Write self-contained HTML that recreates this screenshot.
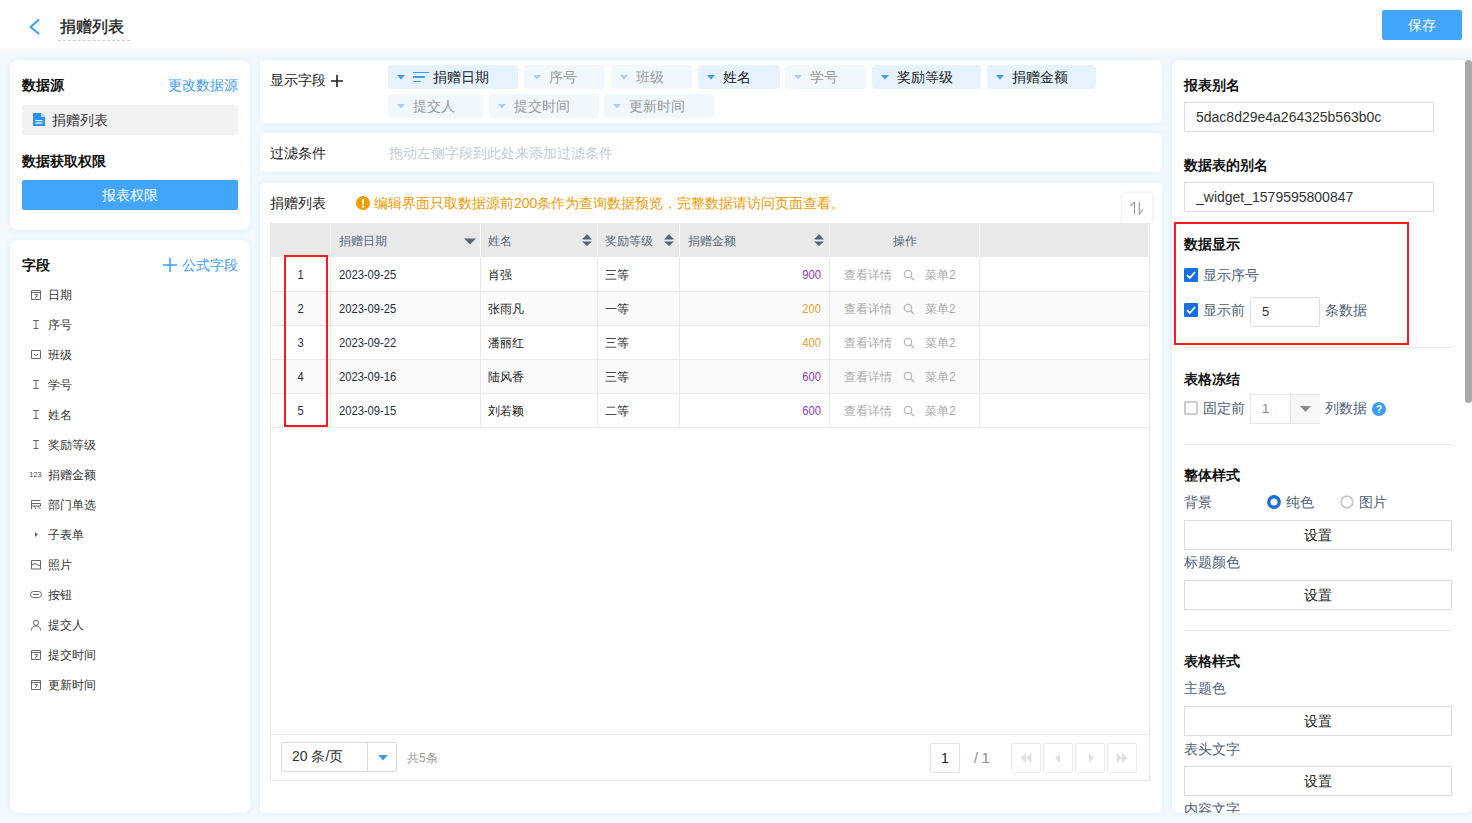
<!DOCTYPE html>
<html><head><meta charset="utf-8">
<style>
*{box-sizing:border-box;margin:0;padding:0}
html,body{width:1472px;height:823px;overflow:hidden}
body{position:relative;background:#f2f9fe;font-family:"Liberation Sans",sans-serif;color:#333;font-size:14px;line-height:20px}
.a{position:absolute;white-space:nowrap}
.pn{position:absolute;background:#fff;box-shadow:0 0 6px rgba(0,150,250,.11)}
.b{font-weight:bold;color:#111}
.blue{color:#3d9cf5}
.t12{font-size:12px}
.t13{font-size:13px}
.btn{position:absolute;background:#42a5fc;color:#fff;text-align:center;border-radius:2px}
.fi{position:absolute;left:30px;width:12px;height:12px}
.num{font-size:13px;line-height:20px;color:#1f2d3d;transform:scaleX(.86);transform-origin:0 0}
.numc{transform-origin:50% 0}
.numr{transform-origin:100% 0}
.fl{position:absolute;left:48px;font-size:12px;line-height:20px;color:#333}
</style></head><body>

<!-- header -->
<div class="a" style="left:0;top:0;width:1472px;height:50px;background:#fff"></div>
<svg class="a" style="left:27px;top:17px" width="16" height="20" viewBox="0 0 16 20"><polyline points="11.5,3 3.5,10 11.5,16.5" fill="none" stroke="#3d9cf5" stroke-width="2" stroke-linecap="round" stroke-linejoin="round"/></svg>
<div class="a" style="left:60px;top:16px;font-size:16px;line-height:22px;color:#1a1a1a;-webkit-text-stroke:0.35px #1a1a1a">捐赠列表</div>
<div class="a" style="left:58px;top:40px;width:72px;height:0;border-top:1px dashed #d0d0d0"></div>
<div class="btn" style="left:1382px;top:10px;width:80px;height:30px;line-height:30px">保存</div>

<!-- left panel 1 -->
<div class="pn" style="left:10px;top:60px;width:240px;height:170px;border-radius:8px"></div>
<div class="a b" style="left:22px;top:75px">数据源</div>
<div class="a blue" style="left:168px;top:75px">更改数据源</div>
<div class="a" style="left:22px;top:105px;width:216px;height:30px;background:#f2f2f2;border-radius:2px"></div>
<svg class="a" style="left:33px;top:113px" width="12" height="13" viewBox="0 0 12 13"><path d="M0 0H8L12 4V13H0Z" fill="#2d8ff0"/><path d="M8 0V4H12" fill="#bfe0fb"/><rect x="2.5" y="7" width="7" height="1.2" fill="#fff"/><rect x="2.5" y="9.5" width="7" height="1.2" fill="#fff"/></svg>
<div class="a" style="left:52px;top:110px">捐赠列表</div>
<div class="a b" style="left:22px;top:151px">数据获取权限</div>
<div class="btn" style="left:22px;top:180px;width:216px;height:30px;line-height:30px">报表权限</div>

<!-- left panel 2 -->
<div class="pn" style="left:10px;top:240px;width:240px;height:573px;border-radius:8px"></div>
<div class="a b" style="left:22px;top:255px">字段</div>
<svg class="a" style="left:163px;top:258px" width="14" height="14" viewBox="0 0 14 14"><path d="M7 0V14M0 7H14" stroke="#3d9cf5" stroke-width="1.5"/></svg>
<div class="a blue" style="left:182px;top:255px">公式字段</div>

<!-- fields -->
<svg class="a" style="left:30px;top:289px" width="12" height="11" viewBox="0 0 12 11"><path d="M1.5 1.5H10.5V10.5H1.5Z M1.5 3.5H10.5" fill="none" stroke="#666" stroke-width="1"/><path d="M4.5 5.5H7.5L5.5 9" fill="none" stroke="#666" stroke-width="1"/></svg>
<div class="fl" style="top:285px">日期</div>
<svg class="a" style="left:30px;top:319px" width="12" height="11" viewBox="0 0 12 11"><path d="M3 1.5H9M6 1.5V9M3.5 9.5H8.5" fill="none" stroke="#666" stroke-width="1"/></svg>
<div class="fl" style="top:315px">序号</div>
<svg class="a" style="left:30px;top:349px" width="12" height="11" viewBox="0 0 12 11"><path d="M1.5 1.5H10.5V9.5H1.5Z" fill="none" stroke="#666" stroke-width="1"/><path d="M4 5L6 6.5L8 5" fill="none" stroke="#666" stroke-width="1"/></svg>
<div class="fl" style="top:345px">班级</div>
<svg class="a" style="left:30px;top:379px" width="12" height="11" viewBox="0 0 12 11"><path d="M3 1.5H9M6 1.5V9M3.5 9.5H8.5" fill="none" stroke="#666" stroke-width="1"/></svg>
<div class="fl" style="top:375px">学号</div>
<svg class="a" style="left:30px;top:409px" width="12" height="11" viewBox="0 0 12 11"><path d="M3 1.5H9M6 1.5V9M3.5 9.5H8.5" fill="none" stroke="#666" stroke-width="1"/></svg>
<div class="fl" style="top:405px">姓名</div>
<svg class="a" style="left:30px;top:439px" width="12" height="11" viewBox="0 0 12 11"><path d="M3 1.5H9M6 1.5V9M3.5 9.5H8.5" fill="none" stroke="#666" stroke-width="1"/></svg>
<div class="fl" style="top:435px">奖励等级</div>
<div class="a" style="left:29px;top:469px;font-size:8px;line-height:11px;color:#555;letter-spacing:-0.3px">123</div>
<div class="fl" style="top:465px">捐赠金额</div>
<svg class="a" style="left:30px;top:499px" width="12" height="11" viewBox="0 0 12 11"><path d="M1.5 1.5H10.5M1.5 1.5V10M1.5 4.5H10.5V7H1.5M4 7L6 10M7.5 7L10.5 10" fill="none" stroke="#666" stroke-width="1"/></svg>
<div class="fl" style="top:495px">部门单选</div>
<svg class="a" style="left:30px;top:529px" width="12" height="11" viewBox="0 0 12 11"><path d="M5 3L8 5.5L5 8Z" fill="#666"/></svg>
<div class="fl" style="top:525px">子表单</div>
<svg class="a" style="left:30px;top:559px" width="12" height="11" viewBox="0 0 12 11"><path d="M1.5 1.5H10.5V10H1.5Z" fill="none" stroke="#666" stroke-width="1"/><path d="M2 6L5 4.5L10 7" fill="none" stroke="#666" stroke-width="1"/></svg>
<div class="fl" style="top:555px">照片</div>
<svg class="a" style="left:29px;top:589px" width="14" height="11" viewBox="0 0 14 11"><rect x="1.5" y="2.5" width="11" height="6" rx="3" fill="none" stroke="#666" stroke-width="1"/><path d="M4 5.5H10" stroke="#666" stroke-width="1"/></svg>
<div class="fl" style="top:585px">按钮</div>
<svg class="a" style="left:30px;top:619px" width="12" height="12" viewBox="0 0 12 12"><circle cx="6" cy="3.8" r="2.6" fill="none" stroke="#666" stroke-width="1"/><path d="M1.5 11.5C1.5 8 3.5 7 6 7S10.5 8 10.5 11.5" fill="none" stroke="#666" stroke-width="1"/></svg>
<div class="fl" style="top:615px">提交人</div>
<svg class="a" style="left:30px;top:649px" width="12" height="11" viewBox="0 0 12 11"><path d="M1.5 1.5H10.5V10.5H1.5Z M1.5 3.5H10.5" fill="none" stroke="#666" stroke-width="1"/><path d="M4.5 5.5H7.5L5.5 9" fill="none" stroke="#666" stroke-width="1"/></svg>
<div class="fl" style="top:645px">提交时间</div>
<svg class="a" style="left:30px;top:679px" width="12" height="11" viewBox="0 0 12 11"><path d="M1.5 1.5H10.5V10.5H1.5Z M1.5 3.5H10.5" fill="none" stroke="#666" stroke-width="1"/><path d="M4.5 5.5H7.5L5.5 9" fill="none" stroke="#666" stroke-width="1"/></svg>
<div class="fl" style="top:675px">更新时间</div>

<!-- middle panels -->
<div class="pn" style="left:260px;top:60px;width:902px;height:63px;border-radius:4px"></div>
<div class="a" style="left:270px;top:70px;color:#222">显示字段</div>
<svg class="a" style="left:331px;top:75px" width="12" height="12" viewBox="0 0 12 12"><path d="M6 0V12M0 6H12" stroke="#222" stroke-width="1.6"/></svg>
<div class="a" style="left:388px;top:65px;width:130px;height:24px;background:#e6f3fe;border-radius:4px"></div>
<svg class="a" style="left:397px;top:75px" width="8" height="5" viewBox="0 0 8 5"><path d="M0 0H8L4 4.5Z" fill="#3d9cf5"/></svg>
<svg class="a" style="left:413px;top:71px" width="16" height="12" viewBox="0 0 16 12"><rect x="0" y="1" width="16" height="1" fill="#3d9cf5"/><rect x="0" y="5" width="12" height="2" fill="#3d9cf5"/><rect x="0" y="10" width="8" height="1" fill="#3d9cf5"/></svg>
<div class="a" style="left:433px;top:67px;color:#222">捐赠日期</div>
<div class="a" style="left:524px;top:65px;width:81px;height:24px;background:#f0f8fe;border-radius:4px"></div>
<svg class="a" style="left:533px;top:75px" width="8" height="5" viewBox="0 0 8 5"><path d="M0 0H8L4 4.5Z" fill="#a5d3fa"/></svg>
<div class="a" style="left:549px;top:67px;color:#999">序号</div>
<div class="a" style="left:611px;top:65px;width:81px;height:24px;background:#f0f8fe;border-radius:4px"></div>
<svg class="a" style="left:620px;top:75px" width="8" height="5" viewBox="0 0 8 5"><path d="M0 0H8L4 4.5Z" fill="#a5d3fa"/></svg>
<div class="a" style="left:636px;top:67px;color:#999">班级</div>
<div class="a" style="left:698px;top:65px;width:82px;height:24px;background:#e6f3fe;border-radius:4px"></div>
<svg class="a" style="left:707px;top:75px" width="8" height="5" viewBox="0 0 8 5"><path d="M0 0H8L4 4.5Z" fill="#3d9cf5"/></svg>
<div class="a" style="left:723px;top:67px;color:#222">姓名</div>
<div class="a" style="left:785px;top:65px;width:81px;height:24px;background:#f0f8fe;border-radius:4px"></div>
<svg class="a" style="left:794px;top:75px" width="8" height="5" viewBox="0 0 8 5"><path d="M0 0H8L4 4.5Z" fill="#a5d3fa"/></svg>
<div class="a" style="left:810px;top:67px;color:#999">学号</div>
<div class="a" style="left:872px;top:65px;width:109px;height:24px;background:#e6f3fe;border-radius:4px"></div>
<svg class="a" style="left:881px;top:75px" width="8" height="5" viewBox="0 0 8 5"><path d="M0 0H8L4 4.5Z" fill="#3d9cf5"/></svg>
<div class="a" style="left:897px;top:67px;color:#222">奖励等级</div>
<div class="a" style="left:987px;top:65px;width:109px;height:24px;background:#e6f3fe;border-radius:4px"></div>
<svg class="a" style="left:996px;top:75px" width="8" height="5" viewBox="0 0 8 5"><path d="M0 0H8L4 4.5Z" fill="#3d9cf5"/></svg>
<div class="a" style="left:1012px;top:67px;color:#222">捐赠金额</div>
<div class="a" style="left:388px;top:94px;width:95px;height:24px;background:#f0f8fe;border-radius:4px"></div>
<svg class="a" style="left:397px;top:104px" width="8" height="5" viewBox="0 0 8 5"><path d="M0 0H8L4 4.5Z" fill="#a5d3fa"/></svg>
<div class="a" style="left:413px;top:96px;color:#999">提交人</div>
<div class="a" style="left:489px;top:94px;width:110px;height:24px;background:#f0f8fe;border-radius:4px"></div>
<svg class="a" style="left:498px;top:104px" width="8" height="5" viewBox="0 0 8 5"><path d="M0 0H8L4 4.5Z" fill="#a5d3fa"/></svg>
<div class="a" style="left:514px;top:96px;color:#999">提交时间</div>
<div class="a" style="left:604px;top:94px;width:110px;height:24px;background:#f0f8fe;border-radius:4px"></div>
<svg class="a" style="left:613px;top:104px" width="8" height="5" viewBox="0 0 8 5"><path d="M0 0H8L4 4.5Z" fill="#a5d3fa"/></svg>
<div class="a" style="left:629px;top:96px;color:#999">更新时间</div>

<div class="pn" style="left:260px;top:133px;width:902px;height:39px;border-radius:4px"></div>
<div class="a" style="left:270px;top:143px;color:#222">过滤条件</div>
<div class="a" style="left:389px;top:143px;color:#c3cbd3">拖动左侧字段到此处来添加过滤条件</div>

<div class="pn" style="left:260px;top:183px;width:902px;height:630px;border-radius:4px"></div>
<div class="a" style="left:270px;top:193px;color:#222">捐赠列表</div>
<svg class="a" style="left:356px;top:196px" width="14" height="14" viewBox="0 0 14 14"><circle cx="7" cy="7" r="7" fill="#f39c00"/><rect x="6" y="3" width="2" height="5.5" fill="#fff"/><rect x="6" y="9.5" width="2" height="2" fill="#fff"/></svg>
<div class="a" style="left:374px;top:193px;color:#f29a00">编辑界面只取数据源前200条作为查询数据预览，完整数据请访问页面查看。</div>
<div class="a" style="left:1122px;top:193px;width:30px;height:30px;background:#fff;box-shadow:0 0 3px rgba(0,0,0,.12)"></div>
<svg class="a" style="left:1129px;top:200px" width="16" height="16" viewBox="0 0 16 16"><path d="M5.5 2V14.5M5.5 2L1.5 6M10.3 2V14.5M10.3 14.5L14 9.5" fill="none" stroke="#999" stroke-width="1.1"/></svg>


<!-- table -->
<div class="a" style="left:270px;top:223px;width:880px;height:558px;border:1px solid #e6e6e6;background:#fff"></div>
<div class="a" style="left:270px;top:223px;width:878px;height:34px;background:#e9e9e9"></div>
<div class="a" style="left:1148px;top:224px;width:1px;height:33px;background:#fbfbfb"></div>
<div class="a" style="left:330px;top:223px;width:1px;height:204px;background:#e9e9e9"></div>
<div class="a" style="left:330px;top:224px;width:1px;height:33px;background:#fff"></div>
<div class="a" style="left:480px;top:223px;width:1px;height:204px;background:#e9e9e9"></div>
<div class="a" style="left:480px;top:224px;width:1px;height:33px;background:#fff"></div>
<div class="a" style="left:597px;top:223px;width:1px;height:204px;background:#e9e9e9"></div>
<div class="a" style="left:597px;top:224px;width:1px;height:33px;background:#fff"></div>
<div class="a" style="left:679px;top:223px;width:1px;height:204px;background:#e9e9e9"></div>
<div class="a" style="left:679px;top:224px;width:1px;height:33px;background:#fff"></div>
<div class="a" style="left:829px;top:223px;width:1px;height:204px;background:#e9e9e9"></div>
<div class="a" style="left:829px;top:224px;width:1px;height:33px;background:#fff"></div>
<div class="a" style="left:979px;top:223px;width:1px;height:204px;background:#e9e9e9"></div>
<div class="a" style="left:979px;top:224px;width:1px;height:33px;background:#fff"></div>
<div class="a" style="left:271px;top:257px;width:878px;height:34px;background:#fff"></div>
<div class="a" style="left:271px;top:291px;width:878px;height:34px;background:#fafafa"></div>
<div class="a" style="left:271px;top:325px;width:878px;height:34px;background:#fff"></div>
<div class="a" style="left:271px;top:359px;width:878px;height:34px;background:#fafafa"></div>
<div class="a" style="left:271px;top:393px;width:878px;height:34px;background:#fff"></div>
<div class="a" style="left:271px;top:291px;width:878px;height:1px;background:#e9e9e9"></div>
<div class="a" style="left:271px;top:325px;width:878px;height:1px;background:#e9e9e9"></div>
<div class="a" style="left:271px;top:359px;width:878px;height:1px;background:#e9e9e9"></div>
<div class="a" style="left:271px;top:393px;width:878px;height:1px;background:#e9e9e9"></div>
<div class="a" style="left:271px;top:427px;width:878px;height:1px;background:#e9e9e9"></div>
<div class="a" style="left:330px;top:257px;width:1px;height:170px;background:#e9e9e9"></div>
<div class="a" style="left:480px;top:257px;width:1px;height:170px;background:#e9e9e9"></div>
<div class="a" style="left:597px;top:257px;width:1px;height:170px;background:#e9e9e9"></div>
<div class="a" style="left:679px;top:257px;width:1px;height:170px;background:#e9e9e9"></div>
<div class="a" style="left:829px;top:257px;width:1px;height:170px;background:#e9e9e9"></div>
<div class="a" style="left:979px;top:257px;width:1px;height:170px;background:#e9e9e9"></div>
<div class="a num numc" style="left:271px;top:265px;width:59px;text-align:center">1</div>
<div class="a num" style="left:339px;top:265px">2023-09-25</div>
<div class="a t12" style="left:488px;top:265px;color:#222">肖强</div>
<div class="a t12" style="left:605px;top:265px;color:#222">三等</div>
<div class="a num numr" style="left:680px;top:265px;width:141px;text-align:right;color:#8c3bb8">900</div>
<div class="a t12" style="left:844px;top:265px;color:#aaa">查看详情</div>
<svg class="a" style="left:903px;top:269px" width="12" height="12" viewBox="0 0 12 12"><circle cx="5" cy="5" r="3.8" fill="none" stroke="#aaa" stroke-width="1"/><path d="M7.8 7.8L11 11" stroke="#aaa" stroke-width="1.1"/></svg>
<div class="a t12" style="left:925px;top:265px;color:#aaa">菜单2</div>
<div class="a num numc" style="left:271px;top:299px;width:59px;text-align:center">2</div>
<div class="a num" style="left:339px;top:299px">2023-09-25</div>
<div class="a t12" style="left:488px;top:299px;color:#222">张雨凡</div>
<div class="a t12" style="left:605px;top:299px;color:#222">一等</div>
<div class="a num numr" style="left:680px;top:299px;width:141px;text-align:right;color:#e8a030">200</div>
<div class="a t12" style="left:844px;top:299px;color:#aaa">查看详情</div>
<svg class="a" style="left:903px;top:303px" width="12" height="12" viewBox="0 0 12 12"><circle cx="5" cy="5" r="3.8" fill="none" stroke="#aaa" stroke-width="1"/><path d="M7.8 7.8L11 11" stroke="#aaa" stroke-width="1.1"/></svg>
<div class="a t12" style="left:925px;top:299px;color:#aaa">菜单2</div>
<div class="a num numc" style="left:271px;top:333px;width:59px;text-align:center">3</div>
<div class="a num" style="left:339px;top:333px">2023-09-22</div>
<div class="a t12" style="left:488px;top:333px;color:#222">潘丽红</div>
<div class="a t12" style="left:605px;top:333px;color:#222">三等</div>
<div class="a num numr" style="left:680px;top:333px;width:141px;text-align:right;color:#e8a030">400</div>
<div class="a t12" style="left:844px;top:333px;color:#aaa">查看详情</div>
<svg class="a" style="left:903px;top:337px" width="12" height="12" viewBox="0 0 12 12"><circle cx="5" cy="5" r="3.8" fill="none" stroke="#aaa" stroke-width="1"/><path d="M7.8 7.8L11 11" stroke="#aaa" stroke-width="1.1"/></svg>
<div class="a t12" style="left:925px;top:333px;color:#aaa">菜单2</div>
<div class="a num numc" style="left:271px;top:367px;width:59px;text-align:center">4</div>
<div class="a num" style="left:339px;top:367px">2023-09-16</div>
<div class="a t12" style="left:488px;top:367px;color:#222">陆风香</div>
<div class="a t12" style="left:605px;top:367px;color:#222">三等</div>
<div class="a num numr" style="left:680px;top:367px;width:141px;text-align:right;color:#8c3bb8">600</div>
<div class="a t12" style="left:844px;top:367px;color:#aaa">查看详情</div>
<svg class="a" style="left:903px;top:371px" width="12" height="12" viewBox="0 0 12 12"><circle cx="5" cy="5" r="3.8" fill="none" stroke="#aaa" stroke-width="1"/><path d="M7.8 7.8L11 11" stroke="#aaa" stroke-width="1.1"/></svg>
<div class="a t12" style="left:925px;top:367px;color:#aaa">菜单2</div>
<div class="a num numc" style="left:271px;top:401px;width:59px;text-align:center">5</div>
<div class="a num" style="left:339px;top:401px">2023-09-15</div>
<div class="a t12" style="left:488px;top:401px;color:#222">刘若颖</div>
<div class="a t12" style="left:605px;top:401px;color:#222">二等</div>
<div class="a num numr" style="left:680px;top:401px;width:141px;text-align:right;color:#8c3bb8">600</div>
<div class="a t12" style="left:844px;top:401px;color:#aaa">查看详情</div>
<svg class="a" style="left:903px;top:405px" width="12" height="12" viewBox="0 0 12 12"><circle cx="5" cy="5" r="3.8" fill="none" stroke="#aaa" stroke-width="1"/><path d="M7.8 7.8L11 11" stroke="#aaa" stroke-width="1.1"/></svg>
<div class="a t12" style="left:925px;top:401px;color:#aaa">菜单2</div>
<div class="a t12" style="left:339px;top:231px;color:#56677a">捐赠日期</div>
<svg class="a" style="left:464px;top:238px" width="12" height="7" viewBox="0 0 12 7"><path d="M0 0.5H12L6 6.5Z" fill="#56677a"/></svg>
<div class="a t12" style="left:488px;top:231px;color:#56677a">姓名</div>
<svg class="a" style="left:582px;top:234px" width="10" height="12" viewBox="0 0 10 12"><path d="M5 0L10 5.5H0Z M0 7.5H10L5 12Z" fill="#56677a"/></svg>
<div class="a t12" style="left:605px;top:231px;color:#56677a">奖励等级</div>
<svg class="a" style="left:664px;top:234px" width="10" height="12" viewBox="0 0 10 12"><path d="M5 0L10 5.5H0Z M0 7.5H10L5 12Z" fill="#56677a"/></svg>
<div class="a t12" style="left:688px;top:231px;color:#56677a">捐赠金额</div>
<svg class="a" style="left:814px;top:234px" width="10" height="12" viewBox="0 0 10 12"><path d="M5 0L10 5.5H0Z M0 7.5H10L5 12Z" fill="#56677a"/></svg>
<div class="a t12" style="left:830px;top:231px;width:149px;text-align:center;color:#56677a">操作</div>
<div class="a" style="left:284px;top:255px;width:44px;height:172px;border:2px solid #ff1a1a"></div>
<div class="a" style="left:271px;top:734px;width:878px;height:1px;background:#e6e6e6"></div>
<div class="a" style="left:281px;top:742px;width:116px;height:30px;border:1px solid #dcdcdc;border-radius:2px;background:#fff"></div>
<div class="a" style="left:367px;top:743px;width:1px;height:28px;background:#dcdcdc"></div>
<div class="a" style="left:292px;top:746px;color:#333">20 条/页</div>
<svg class="a" style="left:378px;top:755px" width="10" height="6" viewBox="0 0 10 6"><path d="M0 0H10L5 5.5Z" fill="#3d9cf5"/></svg>
<div class="a t12" style="left:407px;top:748px;color:#999">共5条</div>
<div class="a" style="left:930px;top:743px;width:30px;height:30px;border:1px solid #e3e3e3;border-radius:2px;text-align:center;line-height:28px;color:#222">1</div>
<div class="a" style="left:974px;top:748px;color:#888">/ 1</div>
<div class="a" style="left:1011px;top:743px;width:30px;height:30px;border:1px solid #ececec;border-radius:2px"></div>
<div class="a" style="left:1043px;top:743px;width:30px;height:30px;border:1px solid #ececec;border-radius:2px"></div>
<div class="a" style="left:1075px;top:743px;width:30px;height:30px;border:1px solid #ececec;border-radius:2px"></div>
<div class="a" style="left:1107px;top:743px;width:30px;height:30px;border:1px solid #ececec;border-radius:2px"></div>
<svg class="a" style="left:1020px;top:752px" width="12" height="12" viewBox="0 0 12 12"><path d="M6 1L0.5 6L6 11ZM11.5 1L6 6L11.5 11Z" fill="#e0e0e0"/></svg>
<svg class="a" style="left:1054px;top:752px" width="8" height="12" viewBox="0 0 8 12"><path d="M6 1L1 6L6 11Z" fill="#e0e0e0"/></svg>
<svg class="a" style="left:1087px;top:752px" width="8" height="12" viewBox="0 0 8 12"><path d="M2 1L7 6L2 11Z" fill="#e0e0e0"/></svg>
<svg class="a" style="left:1116px;top:752px" width="12" height="12" viewBox="0 0 12 12"><path d="M0.5 1L6 6L0.5 11ZM6 1L11.5 6L6 11Z" fill="#e0e0e0"/></svg>


<!-- right panel -->
<div class="pn" style="left:1172px;top:60px;width:300px;height:753px;border-radius:8px"></div>
<div class="a" style="left:1465px;top:60px;width:7px;height:343px;background:#a9a9a9;border-radius:4px"></div>
<div class="a b" style="left:1184px;top:75px">报表别名</div>
<div class="a" style="left:1184px;top:102px;width:250px;height:30px;border:1px solid #dedede;padding-left:11px;line-height:28px;color:#333">5dac8d29e4a264325b563b0c</div>
<div class="a b" style="left:1184px;top:155px">数据表的别名</div>
<div class="a" style="left:1184px;top:182px;width:250px;height:30px;border:1px solid #dedede;padding-left:11px;line-height:28px;color:#333">_widget_1579595800847</div>
<div class="a" style="left:1174px;top:222px;width:235px;height:123px;border:2px solid #ff1a1a"></div>
<div class="a b" style="left:1184px;top:234px">数据显示</div>
<svg class="a" style="left:1184px;top:268px" width="14" height="14" viewBox="0 0 14 14"><rect width="14" height="14" rx="1" fill="#1a6fe0"/><path d="M3 7.2L5.8 10L11 4" fill="none" stroke="#fff" stroke-width="1.8"/></svg>
<div class="a" style="left:1203px;top:265px;color:#4f6178">显示序号</div>
<svg class="a" style="left:1184px;top:303px" width="14" height="14" viewBox="0 0 14 14"><rect width="14" height="14" rx="1" fill="#1a6fe0"/><path d="M3 7.2L5.8 10L11 4" fill="none" stroke="#fff" stroke-width="1.8"/></svg>
<div class="a" style="left:1203px;top:300px;color:#4f6178">显示前</div>
<div class="a" style="left:1250px;top:297px;width:70px;height:30px;border:1px solid #dedede;padding-left:11px;line-height:28px;color:#333;font-size:13px;border-radius:2px">5</div>
<div class="a" style="left:1325px;top:300px;color:#4f6178">条数据</div>
<div class="a" style="left:1184px;top:347px;width:268px;height:1px;background:#e8e8e8"></div>
<div class="a b" style="left:1184px;top:369px">表格冻结</div>
<div class="a" style="left:1184px;top:401px;width:14px;height:14px;border:2px solid #cdcdcd;background:#fff"></div>
<div class="a" style="left:1203px;top:398px;color:#4f6178">固定前</div>
<div class="a" style="left:1250px;top:394px;width:70px;height:30px;border:1px solid #e6e6e6;background:#fff"></div>
<div class="a" style="left:1290px;top:395px;width:30px;height:28px;background:#f7f7f7;border-left:1px solid #e6e6e6"></div>
<svg class="a" style="left:1300px;top:406px" width="11" height="6" viewBox="0 0 11 6"><path d="M0 0H11L5.5 6Z" fill="#8a8a8a"/></svg>
<div class="a" style="left:1262px;top:399px;color:#888;font-size:13px">1</div>
<div class="a" style="left:1325px;top:398px;color:#4f6178">列数据</div>
<svg class="a" style="left:1372px;top:402px" width="14" height="14" viewBox="0 0 14 14"><circle cx="7" cy="7" r="7" fill="#3d9cf5"/><text x="7" y="11" font-size="10" font-weight="bold" text-anchor="middle" fill="#fff" font-family="Liberation Sans">?</text></svg>
<div class="a" style="left:1184px;top:444px;width:268px;height:1px;background:#e8e8e8"></div>
<div class="a b" style="left:1184px;top:465px">整体样式</div>
<div class="a" style="left:1184px;top:492px;color:#4f6178">背景</div>
<svg class="a" style="left:1267px;top:495px" width="14" height="14" viewBox="0 0 14 14"><circle cx="7" cy="7" r="5.2" fill="#fff" stroke="#1a6fe0" stroke-width="3.4"/></svg>
<div class="a" style="left:1286px;top:492px;color:#4f6178">纯色</div>
<svg class="a" style="left:1340px;top:495px" width="14" height="14" viewBox="0 0 14 14"><circle cx="7" cy="7" r="5.8" fill="#fff" stroke="#c8c8c8" stroke-width="1.8"/></svg>
<div class="a" style="left:1359px;top:492px;color:#4f6178">图片</div>
<div class="a" style="left:1184px;top:520px;width:268px;height:30px;border:1px solid #dcdcdc;text-align:center;line-height:28px;color:#222">设置</div>
<div class="a" style="left:1184px;top:580px;width:268px;height:30px;border:1px solid #dcdcdc;text-align:center;line-height:28px;color:#222">设置</div>
<div class="a" style="left:1184px;top:706px;width:268px;height:30px;border:1px solid #dcdcdc;text-align:center;line-height:28px;color:#222">设置</div>
<div class="a" style="left:1184px;top:766px;width:268px;height:30px;border:1px solid #dcdcdc;text-align:center;line-height:28px;color:#222">设置</div>
<div class="a" style="left:1184px;top:552px;color:#4f6178">标题颜色</div>
<div class="a" style="left:1184px;top:630px;width:268px;height:1px;background:#e8e8e8"></div>
<div class="a b" style="left:1184px;top:651px">表格样式</div>
<div class="a" style="left:1184px;top:678px;color:#4f6178">主题色</div>
<div class="a" style="left:1184px;top:739px;color:#4f6178">表头文字</div>
<div class="a" style="left:1172px;top:798px;width:292px;height:15px;overflow:hidden"><div class="a" style="left:12px;top:1px;color:#4f6178">内容文字</div></div>

</body></html>
